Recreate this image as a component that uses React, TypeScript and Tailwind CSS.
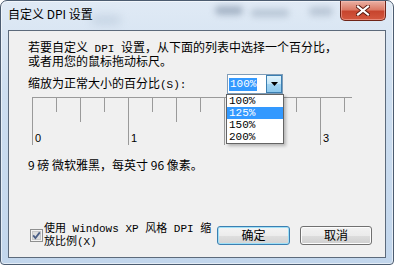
import React from 'react';

const mono = "font-['Liberation_Mono',monospace] text-[11px]";

function CloseButton() {
  return (
    <div className="flex h-[20px] w-[46px] items-center justify-center rounded-b-[5px] border border-t-0 border-[#6e2418] bg-[linear-gradient(180deg,#eab1a4_0%,#dc7b67_45%,#c7452e_55%,#d4583f_100%)] shadow-[inset_0_0_0_1px_rgba(255,200,190,0.45)]">
      <svg width="14" height="11" viewBox="0 0 14 11">
        <path d="M2 1.5 L12 9.5 M12 1.5 L2 9.5" stroke="#5a1a10" strokeWidth="4" strokeLinecap="square" />
        <path d="M2 1.5 L12 9.5 M12 1.5 L2 9.5" stroke="#ffffff" strokeWidth="2.2" strokeLinecap="square" />
      </svg>
    </div>
  );
}

function Ruler() {
  const ticks = Array.from({ length: 14 }, (_, i) => i);
  return (
    <svg width="322" height="48" className="ml-[4px] mt-[3px] block">
      <line x1="0" y1="0.5" x2="320" y2="0.5" stroke="#9a9a9a" />
      {ticks.map((i) => {
        const x = i * 24 + 0.5;
        const h = i % 4 === 0 ? 48 : i % 2 === 0 ? 25 : 15;
        return <line key={i} x1={x} y1={0} x2={x} y2={h} stroke="#9a9a9a" />;
      })}
      {/* the "2" label sits under the open drop-down list */}
      {[0, 1, 3].map((n) => (
        <text key={n} x={n * 96 + 3} y={45} fontSize="11" fontFamily="Liberation Sans" fill="#000">
          {n}
        </text>
      ))}
    </svg>
  );
}

function ComboBox() {
  const options = ['100%', '125%', '150%', '200%'];
  return (
    <div className="relative h-[20px] w-[56px]">
      <div className="flex h-full items-stretch border border-[#7f9db9] bg-white">
        <div className="flex flex-1 items-center pl-[1px]">
          <span className={`${mono} bg-[#3399ff] px-[1px] leading-[13px] text-white`}>100%</span>
        </div>
        <div className="flex w-[16px] items-center justify-center border border-[#3c7fb1] bg-[linear-gradient(180deg,#e3f4fc_0%,#c4e6f8_50%,#a3d4f2_51%,#8cc8ee_100%)]">
          <svg width="7" height="4" viewBox="0 0 7 4">
            <path d="M0 0 H7 L3.5 4 Z" fill="#000" />
          </svg>
        </div>
      </div>
      <div className="absolute left-[-1px] top-[20px] z-10 w-[58px] border border-[#646464] bg-white shadow-[2px_2px_3px_rgba(0,0,0,0.25)]">
        {options.map((o) => (
          <div
            key={o}
            className={`${mono} h-[12px] pl-[2px] leading-[12px] ${o === '125%' ? 'bg-[#3399ff] text-white' : 'text-black'}`}
          >
            {o}
          </div>
        ))}
      </div>
    </div>
  );
}

function CheckBox() {
  return (
    <svg width="13" height="13" viewBox="0 0 13 13" className="shrink-0">
      <rect x="0.5" y="0.5" width="12" height="12" fill="#f4f4f4" stroke="#8e8f8f" />
      <rect x="2.5" y="2.5" width="8" height="8" fill="#dedede" stroke="#c8c8c8" />
      <path d="M3.2 6.4 L5.4 9 L9.8 3.4" stroke="#4b5f86" strokeWidth="1.8" fill="none" />
    </svg>
  );
}

export default function App() {
  return (
    <div className="h-[265px] w-[394px] overflow-hidden bg-white">
      <div className="relative flex h-full flex-col overflow-hidden rounded-b-[4px] rounded-t-[7px] border border-[#4c5c70] bg-[linear-gradient(180deg,#e0eaf5_0%,#cddef0_35%,#c2d6ec_100%)] font-['Noto_Sans_CJK_SC',sans-serif] shadow-[inset_0_0_0_1px_rgba(255,255,255,0.55)]">
        <div className="absolute left-[214px] top-[5px] h-[9px] w-[28px] rounded-full bg-[#6f8299]/50 blur-[3px]" />
        <div className="absolute left-[250px] top-[8px] h-[8px] w-[38px] rounded-full bg-[#8596ab]/40 blur-[3px]" />
        <div className="absolute left-[308px] top-[6px] h-[9px] w-[24px] rounded-full bg-[#8596ab]/40 blur-[3px]" />
        <div className="absolute left-[90px] top-[14px] h-[10px] w-[30px] rounded-full bg-[#a9bccf]/40 blur-[4px]" />

        <div className="relative flex h-[29px] items-start justify-between px-[7px]">
          <span className="mt-[5px] text-[12px] leading-[16px] text-black">自定义 DPI 设置</span>
          <CloseButton />
        </div>

        <div className="relative mx-[7px] flex h-[228px] flex-col border border-[#5c6a7b] bg-[#f0f0f0] pl-[19px] pt-[10px] text-[12px] text-black">
          <p className="whitespace-nowrap leading-[12px]">
            若要自定义<span className={mono}> DPI </span>设置，从下面的列表中选择一个百分比，
            <br />
            或者用您的鼠标拖动标尺。
          </p>

          <div className="mt-[7px] flex h-[20px] items-center">
            <span className="w-[199px] whitespace-nowrap leading-[12px]">
              缩放为正常大小的百分比<span className={mono}>(S):</span>
            </span>
            <ComboBox />
          </div>

          <Ruler />

          <p className="mt-[14px] whitespace-nowrap leading-[12px]">9 磅 微软雅黑，每英寸 96 像素。</p>

          <div className="mt-auto flex items-center pb-[9px] pr-[13px]">
            <div className="ml-[2px] flex w-[189px] items-center gap-[1px]">
              <CheckBox />
              <span className="whitespace-nowrap text-[11px] leading-[11px]">
                使用<span className={mono}> Windows XP </span>风格<span className={mono}> DPI </span>缩
                <br />
                放比例<span className={mono}>(X)</span>
              </span>
            </div>
            <div className="flex gap-[10px]">
              <button className="h-[19px] w-[73px] rounded-[3px] border border-[#3c7fb1] bg-[linear-gradient(180deg,#f4f4f4_0%,#ececec_50%,#dfdfdf_51%,#d3d3d3_100%)] text-[12px] leading-[16px] text-black shadow-[inset_0_0_0_1px_#9fe0f7]">
                确定
              </button>
              <button className="h-[19px] w-[72px] rounded-[3px] border border-[#707070] bg-[linear-gradient(180deg,#f2f2f2_0%,#ebebeb_50%,#dddddd_51%,#cfcfcf_100%)] text-[12px] leading-[16px] text-black shadow-[inset_0_0_0_1px_#fcfcfc]">
                取消
              </button>
            </div>
          </div>
        </div>
      </div>
    </div>
  );
}
